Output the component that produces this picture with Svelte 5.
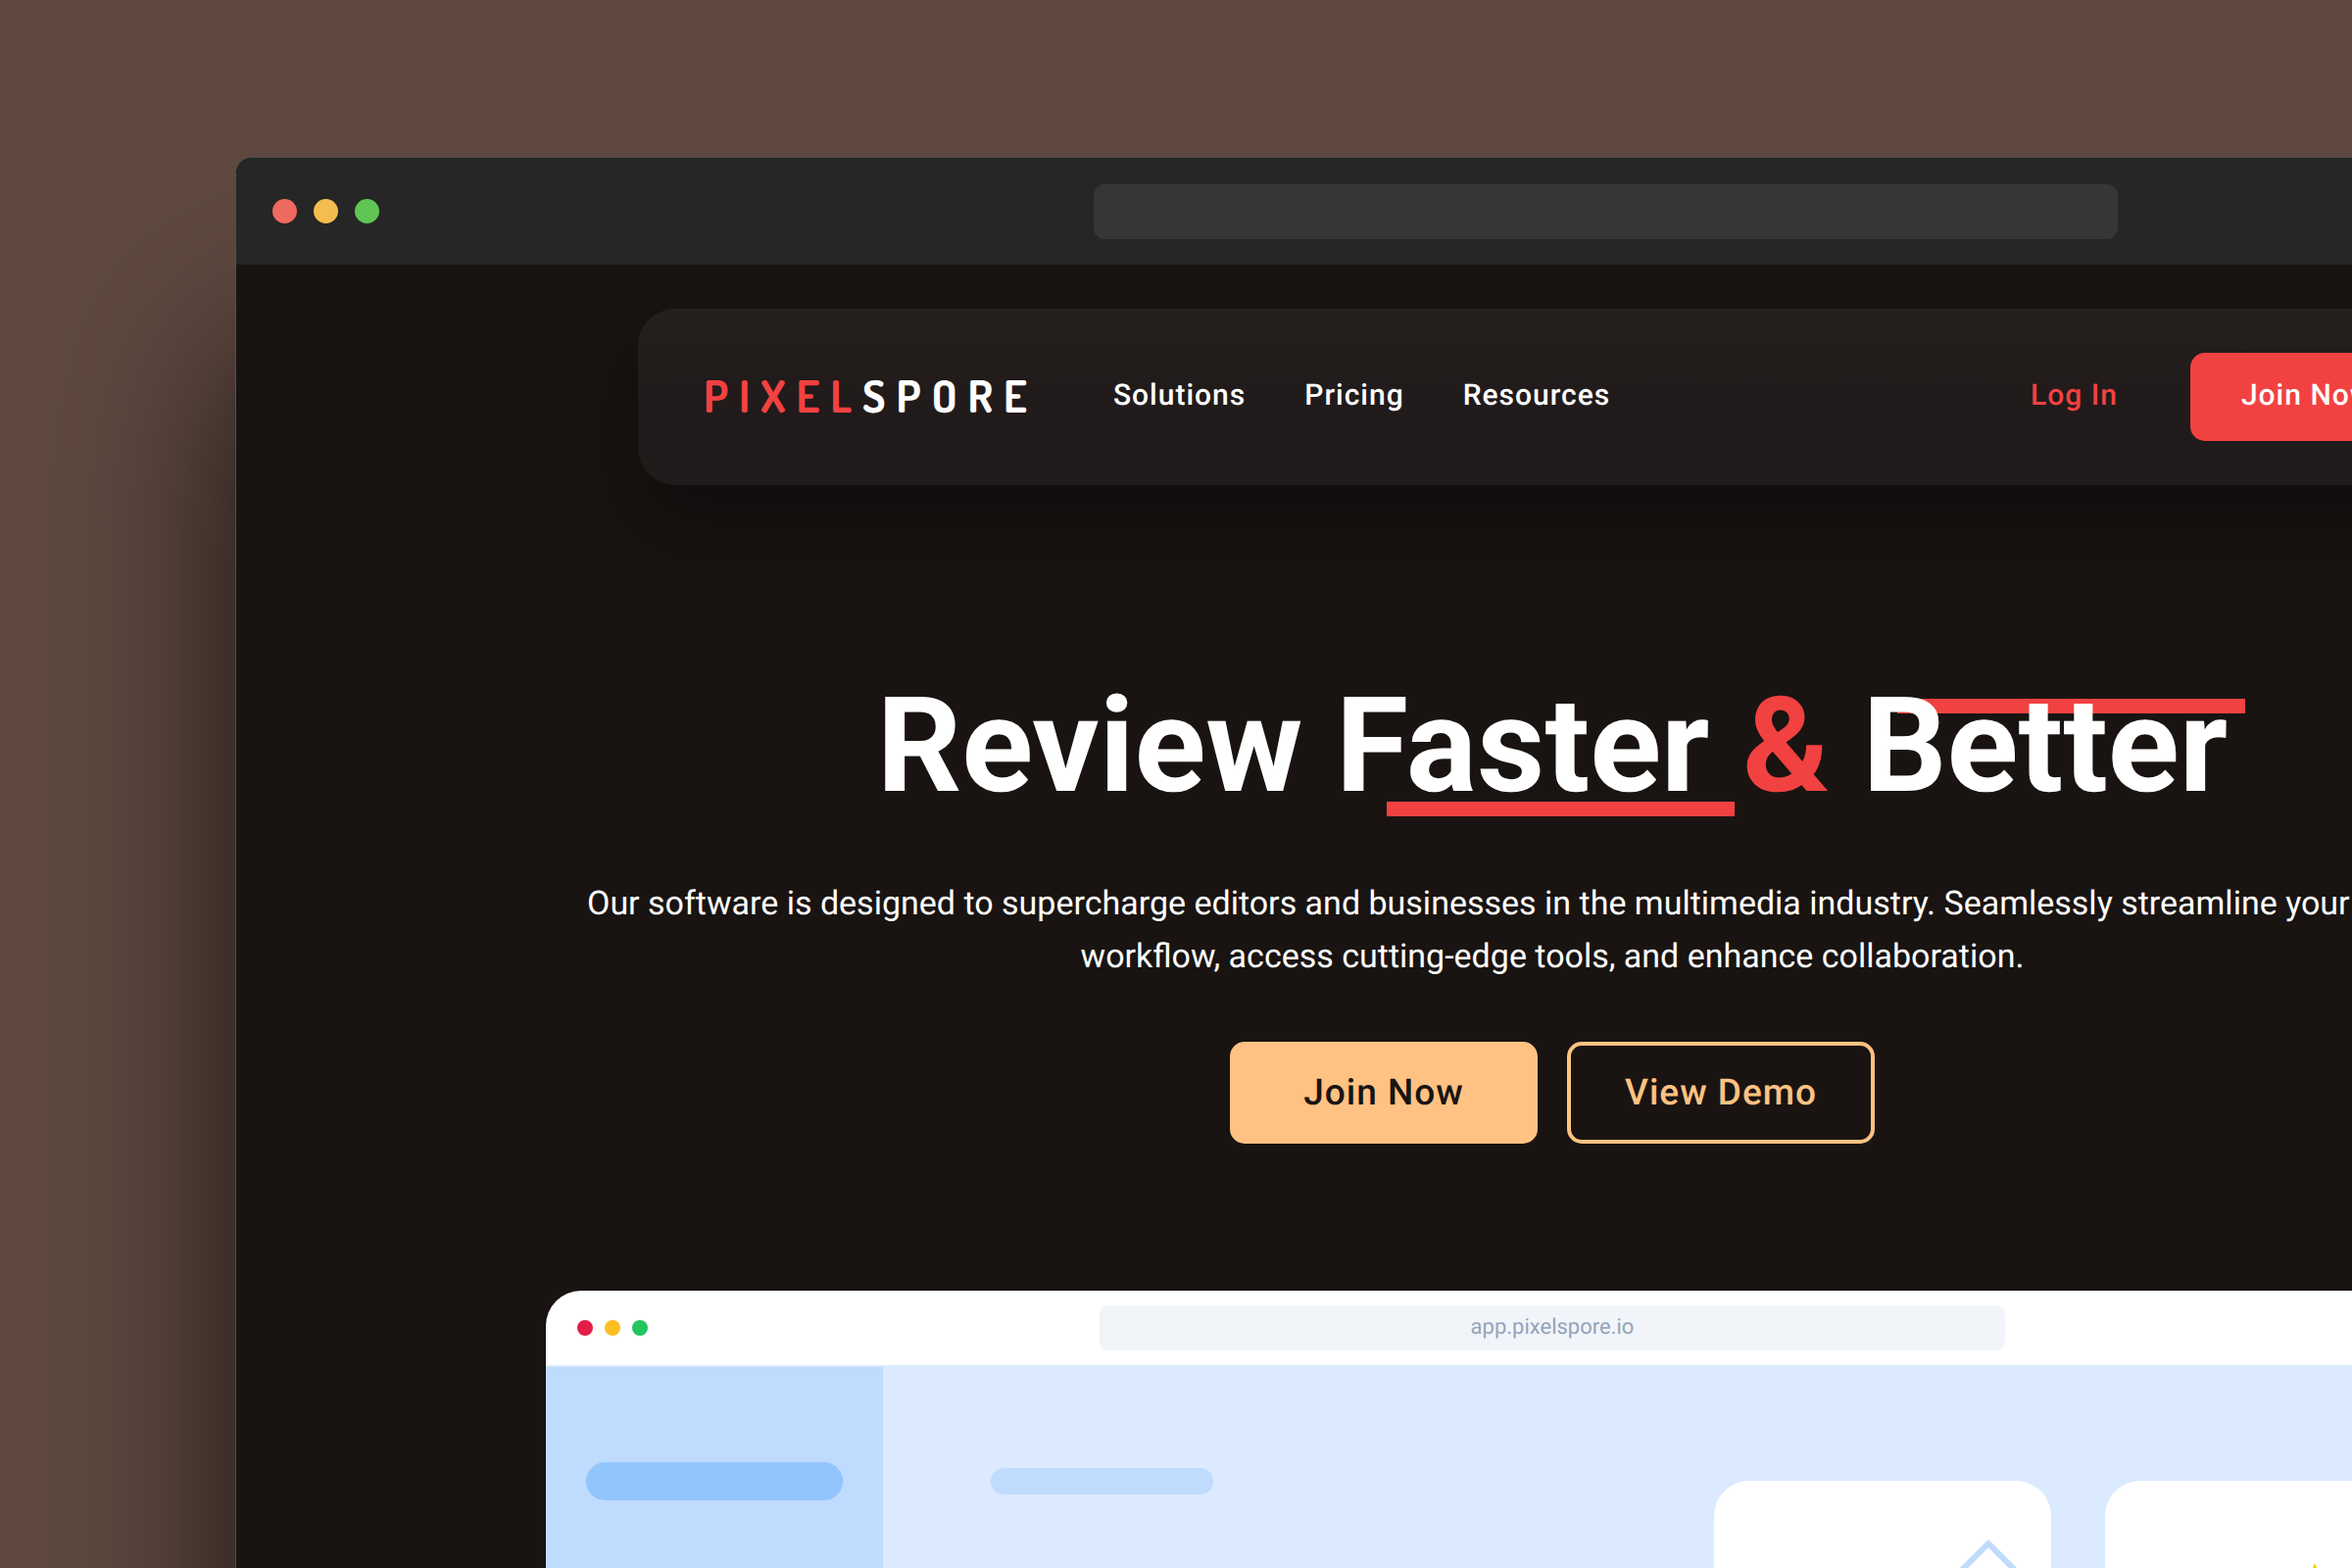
<script>
  const links = ['Solutions', 'Pricing', 'Resources'];
</script>

<div class="stage">
  <div class="window">
    <div class="titlebar">
      <div class="lights"><i class="red"></i><i class="amber"></i><i class="green"></i></div>
      <div class="address"></div>
    </div>

    <div class="page">
      <header class="nav">
        <a class="logo" href="#home"><span>PIXEL</span>SPORE</a>
        <nav>
          {#each links as link}
            <a href="#{link.toLowerCase()}">{link}</a>
          {/each}
        </nav>
        <a class="login" href="#login">Log In</a>
        <button class="join">Join Now</button>
      </header>

      <section class="hero">
        <h1>Review <span class="under">Faster</span> <span class="amp">&amp;</span> <span class="over">Better</span></h1>
        <p>Our software is designed to supercharge editors and businesses in the multimedia industry. Seamlessly streamline your production workflow, access cutting-edge tools, and enhance collaboration.</p>
        <div class="actions">
          <button class="solid">Join Now</button>
          <button class="outline">View Demo</button>
        </div>
      </section>

      <section class="mock">
        <div class="mockbar">
          <div class="dots"><i class="rose"></i><i class="yellow"></i><i class="emerald"></i></div>
          <div class="url">app.pixelspore.io</div>
        </div>
        <div class="mockbody">
          <aside><div class="pill"></div></aside>
          <div class="board">
            <div class="chip"></div>
            <div class="cards">
              <div class="card">
                <svg width="128" height="128" viewBox="0 0 128 128"><path d="M64 8 120 64 64 120 8 64Z" fill="none" stroke="#bfdbfe" stroke-width="6" /></svg>
              </div>
              <div class="card centered">
                <svg width="128" height="128" viewBox="0 0 128 128"><path d="M64 28 75 54 103 56 82 74 88 102 64 87 40 102 46 74 25 56 53 54Z" fill="#facc15" /></svg>
              </div>
              <div class="card"></div>
            </div>
          </div>
        </div>
      </section>
    </div>
  </div>
</div>

<style>
  :global(body) {
    margin: 0;
    background: #5f4941;
  }
  .stage {
    box-sizing: border-box;
    height: 100vh;
    overflow: hidden;
    padding: 160px 0 0 10vw;
    background: #5f4941;
    font-family: Roboto, "Liberation Sans", sans-serif;
    text-rendering: geometricPrecision;
    color: #fff;
  }
  .stage * {
    box-sizing: border-box;
  }
  a {
    color: inherit;
    text-decoration: none;
  }
  button {
    font: inherit;
    text-rendering: inherit;
    border: 0;
    cursor: pointer;
  }
  i {
    display: block;
    border-radius: 50%;
  }
  .window {
    width: 112vw;
    min-height: 2000px;
    border: 1px solid #4f4f4c;
    border-radius: 17px;
    background: #191411;
    box-shadow: 0 200px 190px rgba(0, 0, 0, 0.75);
  }
  .titlebar {
    display: flex;
    align-items: center;
    height: 109px;
    padding: 0 37px;
    border-radius: 16px 16px 0 0;
    background: #262626;
  }
  .lights {
    display: flex;
    gap: 17px;
  }
  .lights i {
    width: 25px;
    height: 25px;
  }
  .red { background: #ee695f; }
  .amber { background: #f5bd4f; }
  .green { background: #61c554; }
  .address {
    width: 1045px;
    height: 56px;
    margin: 0 auto;
    border-radius: 11px;
    background: #363636;
  }
  .page {
    padding-top: 45px;
  }
  .nav {
    display: flex;
    align-items: center;
    width: 1866px;
    height: 180px;
    margin: 0 auto;
    padding: 0 44px 0 67px;
    border-radius: 38px;
    background: linear-gradient(#251f1d, #211b1b 40%, #201a1a);
    box-shadow: 0 40px 70px rgba(12, 5, 10, 0.45);
    font-size: 30px;
    font-weight: 500;
    letter-spacing: 1px;
  }
  .nav a {
    padding-bottom: 3px;
  }
  .logo {
    font-family: Dosis, "Liberation Sans Narrow", Roboto, sans-serif;
    font-size: 45px;
    font-weight: 700;
    letter-spacing: 11px;
  }
  .logo span, .login, .amp {
    color: #f24141;
  }
  nav {
    display: flex;
    gap: 60px;
    margin-left: 77px;
    margin-right: auto;
  }
  .join {
    height: 90px;
    margin-left: 74px;
    padding: 0 52px 4px;
    border-radius: 15px;
    background: #f24141;
    color: #fff;
    letter-spacing: 1px;
  }
  .hero {
    padding-top: 188px;
    text-align: center;
  }
  h1 {
    margin: 0;
    font-size: 135px;
    line-height: 156px;
    font-weight: 700;
  }
  h1 span {
    position: relative;
    z-index: 0;
  }
  .under::after, .over::after {
    content: "";
    position: absolute;
    z-index: -1;
    right: -26px;
    width: 355px;
    height: 15px;
    background: #f24141;
  }
  .under::after {
    bottom: 7px;
  }
  .over::after {
    top: 31px;
    right: -18px;
  }
  p {
    width: 2000px;
    margin: 56px auto 0;
    font-size: 34px;
    line-height: 54px;
  }
  .actions {
    display: flex;
    justify-content: center;
    gap: 30px;
    margin-top: 60px;
  }
  .actions button {
    width: 314px;
    height: 104px;
    border: 4px solid #ffc282;
    border-radius: 15px;
    font-size: 37px;
    font-weight: 500;
    letter-spacing: 1px;
  }
  .solid {
    background: #ffc282;
    color: #191411;
  }
  .outline {
    background: none;
    color: #ffc282;
  }
  .mock {
    width: 2054px;
    margin: 150px auto 0;
    border-radius: 36px 36px 0 0;
    overflow: hidden;
    background: #fff;
  }
  .mockbar {
    display: grid;
    grid-template-columns: 1fr 924px 1fr;
    align-items: center;
    height: 78px;
    padding: 0 32px;
    border-bottom: 2px solid #dbeafe;
  }
  .dots {
    display: flex;
    gap: 12px;
  }
  .dots i {
    width: 16px;
    height: 16px;
  }
  .rose { background: #e11d48; }
  .yellow { background: #fbbf24; }
  .emerald { background: #22c55e; }
  .url {
    height: 46px;
    border-radius: 9px;
    background: #f1f5f9;
    color: #94a3b8;
    font-size: 22px;
    line-height: 46px;
    text-align: center;
  }
  .mockbody {
    display: flex;
    min-height: 1000px;
    background: #dbeafe;
  }
  aside {
    flex: none;
    width: 344px;
    padding: 97px 41px;
    background: #bfdbfe;
  }
  .pill {
    height: 39px;
    border-radius: 20px;
    background: #93c5fd;
  }
  .board {
    display: flex;
    flex: 1;
    align-items: flex-start;
    min-width: 0;
    padding: 103px 0 0 110px;
  }
  .chip {
    flex: none;
    width: 227px;
    height: 27px;
    border-radius: 14px;
    background: #bfdbfe;
  }
  .cards {
    display: flex;
    flex: none;
    gap: 55px;
    margin: 13px 0 0 511px;
  }
  .card {
    display: flex;
    justify-content: flex-end;
    width: 344px;
    height: 400px;
    padding-top: 56px;
    border-radius: 36px;
    background: #fff;
  }
  .centered {
    padding-right: 66px;
  }
</style>
